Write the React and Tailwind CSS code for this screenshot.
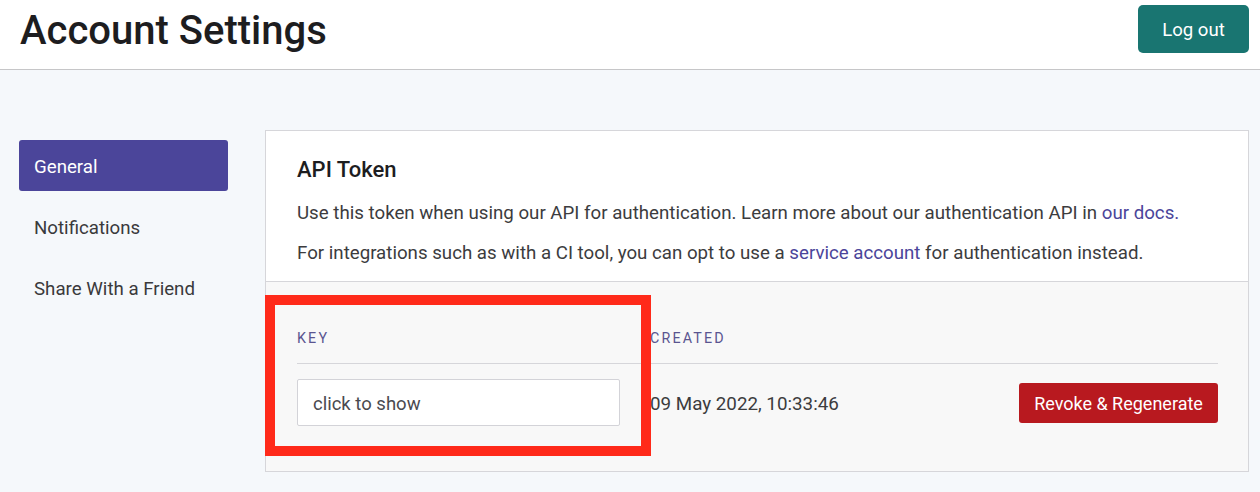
import React from 'react';

function SideItem({ label, active }) {
  return (
    <div
      className={
        'h-[51px] flex items-center px-[15px] pt-[3px] rounded-[3px] text-[18.7px] ' +
        (active ? 'bg-[#4b459a] text-white' : 'text-[#3a3a3c]')
      }
    >
      {label}
    </div>
  );
}

export default function App() {
  return (
    <div
      className="relative min-h-[492px] bg-[#f5f8fb]"
      style={{ fontFamily: 'Roboto, "Liberation Sans", sans-serif' }}
    >
      <header className="h-[70px] bg-white border-b border-[#c6c6c8] flex items-start justify-between pl-[20px] pr-[11px]">
        <h1 className="text-[40px] leading-[62px] font-medium text-[#1d1d1f]">Account Settings</h1>
        <button className="mt-[5px] h-[48px] w-[111px] pt-[4px] rounded-[5px] bg-[#197571] text-white text-[18.6px]">
          Log out
        </button>
      </header>

      <main className="flex pl-[19px] pr-[11px] pt-[60px] pb-[20px]">
        <nav className="w-[209px] shrink-0 pt-[10px] flex flex-col gap-[10px]">
          <SideItem label="General" active />
          <SideItem label="Notifications" />
          <SideItem label="Share With a Friend" />
        </nav>

        <section className="ml-[37px] flex-1 border border-[#d6d6da] bg-white">
          <div className="px-[31px] pt-[23px] pb-[15px] border-b border-[#d6d6da]">
            <h2 className="text-[22px] leading-[32px] font-medium text-[#1d1d1f]">API Token</h2>
            <p className="mt-[14px] text-[18.7px] leading-[26px] text-[#3c3c3e]">
              Use this token when using our API for authentication. Learn more about our authentication API in{' '}
              <a className="text-[#4b459a]">our docs.</a>
            </p>
            <p className="mt-[14px] text-[18.7px] leading-[26px] text-[#3c3c3e]">
              For integrations such as with a CI tool, you can opt to use a{' '}
              <a className="text-[#4b459a]">service account</a> for authentication instead.
            </p>
          </div>

          <div className="bg-[#f8f8f8] pl-[31px] pr-[30px] pt-[47px] pb-[45px]">
            <div className="flex border-b border-[#d6d6da] pb-[16px] text-[14.3px] leading-[18px] tracking-[0.15em] text-[#5a5590]">
              <div className="w-[353px]">KEY</div>
              <div>CREATED</div>
            </div>
            <div className="flex items-center pt-[15px]">
              <div className="w-[353px] shrink-0">
                <input
                  readOnly
                  value="click to show"
                  className="w-[323px] h-[47px] pt-[2px] bg-white border border-[#d3d3d8] rounded-[2px] px-[15px] text-[18.5px] text-[#4a4a50] outline-none"
                />
              </div>
              <div className="flex-1 pt-[3px] text-[18.8px] text-[#3c3c3e]">09 May 2022, 10:33:46</div>
              <button className="h-[40px] w-[199px] pt-[2px] rounded-[3px] bg-[#b8191f] text-white text-[18px]">
                Revoke &amp; Regenerate
              </button>
            </div>
          </div>
        </section>
      </main>

      <div className="absolute left-[265px] top-[295px] w-[386px] h-[161px] border-[10px] border-[#ff2a1a]" />
    </div>
  );
}
